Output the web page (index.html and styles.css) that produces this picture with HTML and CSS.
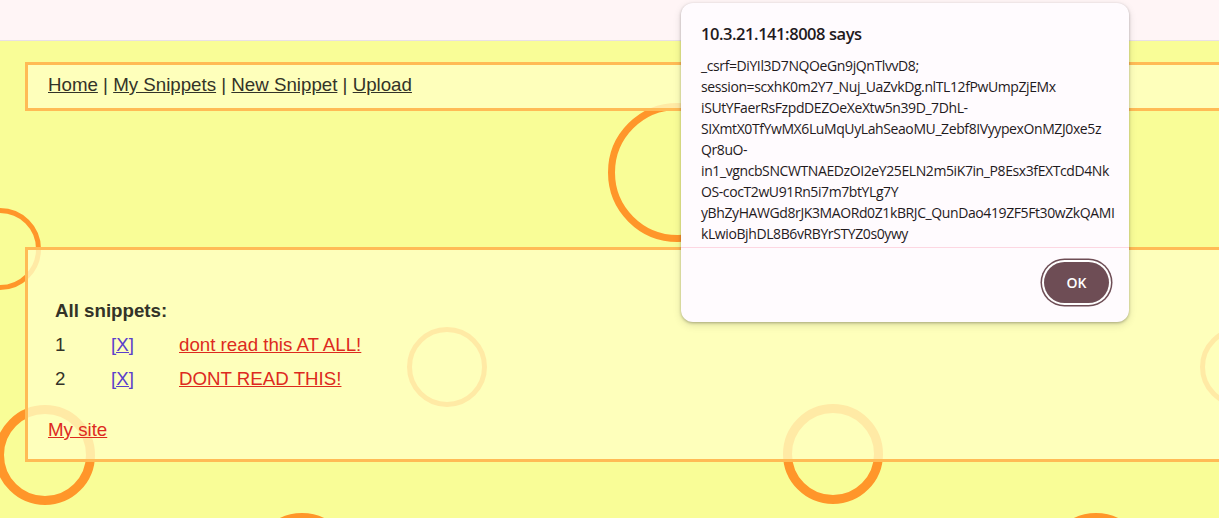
FILE: index.html
```html
<!DOCTYPE html>
<html lang="en">
<head>
<meta charset="utf-8">
<title>Snippets</title>
<link rel="stylesheet" href="styles.css">
</head>
<body>
<div class="topbar"></div>
<div class="decor" aria-hidden="true">
  <div class="ring ring-a"></div>
  <div class="ring ring-b"></div>
  <div class="ring ring-c"></div>
  <div class="ring ring-d"></div>
  <div class="ring ring-e"></div>
  <div class="ring ring-f"></div>
  <div class="ring ring-g"></div>
  <div class="ring ring-h"></div>
</div>
<main class="page">
  <nav class="box nav">
    <a href="#">Home</a> | <a href="#">My Snippets</a> | <a href="#">New Snippet</a> | <a href="#">Upload</a>
  </nav>
  <section class="box content">
    <div class="snippets">
      <div class="heading">All snippets:</div>
      <div class="row"><span class="num">1</span><a class="del" href="#">[X]</a><a class="title" href="#">dont read this AT ALL!</a></div>
      <div class="row"><span class="num">2</span><a class="del" href="#">[X]</a><a class="title" href="#">DONT READ THIS!</a></div>
    </div>
    <a class="mysite" href="#">My site</a>
  </section>
</main>
<div class="dialog" role="alertdialog">
  <div class="dialog-body">
    <div class="dialog-title">10.3.21.141:8008 says</div>
    <div class="dialog-msg">
      <span class="ln">_csrf=DiYIl3D7NQOeGn9jQnTlvvD8;</span>
      <span class="ln">session=scxhK0m2Y7_Nuj_UaZvkDg.nlTL12fPwUmpZjEMx</span>
      <span class="ln">iSUtYFaerRsFzpdDEZOeXeXtw5n39D_7DhL-</span>
      <span class="ln">SIXmtX0TfYwMX6LuMqUyLahSeaoMU_Zebf8IVyypexOnMZJ0xe5z</span>
      <span class="ln">Qr8uO-</span>
      <span class="ln">in1_vgncbSNCWTNAEDzOI2eY25ELN2m5iK7in_P8Esx3fEXTcdD4Nk</span>
      <span class="ln">OS-cocT2wU91Rn5i7m7btYLg7Y</span>
      <span class="ln">yBhZyHAWGd8rJK3MAORd0Z1kBRJC_QunDao419ZF5Ft30wZkQAMI</span>
      <span class="ln">kLwioBjhDL8B6vRBYrSTYZ0s0ywy</span>
    </div>
  </div>
  <div class="dialog-foot">
    <button class="ok" type="button">OK</button>
  </div>
</div>
</body>
</html>
```
FILE: styles.css
```css
html, body {
  margin: 0;
  padding: 0;
  height: 518px;
  overflow: hidden;
}
body {
  position: relative;
  background: #f9fd97;
  font-family: "Liberation Sans", Arial, sans-serif;
  font-size: 18.72px;
  color: #333328;
}
.topbar {
  position: relative;
  z-index: 2;
  height: 40px;
  background: #fff5f6;
  border-bottom: 1px solid #e9e0e6;
}

/* decorative rings */
.decor {
  position: absolute;
  inset: 0;
  z-index: 0;
  overflow: hidden;
}
.ring {
  position: absolute;
  box-sizing: border-box;
  border-radius: 50%;
  border: 9px solid #ff962a;
}
.ring-a { left: -41px; top: 208px; width: 82px; height: 82px; border-width: 5px; }
.ring-b { left: -5px; top: 405px; width: 100px; height: 100px; }
.ring-c { left: 783px; top: 404px; width: 100px; height: 100px; }
.ring-d { left: 407px; top: 327px; width: 80px; height: 80px; border-width: 5px; }
.ring-e { left: 1200px; top: 327px; width: 80px; height: 80px; border-width: 5px; }
.ring-f { left: 608px; top: 103px; width: 139px; height: 139px; border-width: 7px; }
.ring-g { left: 252px; top: 513px; width: 100px; height: 100px; }
.ring-h { left: 1046px; top: 513px; width: 100px; height: 100px; }

/* page */
.page {
  position: relative;
  z-index: 1;
  padding-top: 21px;
  display: flex;
  flex-direction: column;
  gap: 136px;
}
.box {
  margin-left: 25px;
  margin-right: -80px;
  border: 3px solid #ffbb55;
  background: rgba(255, 255, 196, 0.8);
}
.nav {
  padding: 9px 20px 12px;
  line-height: 22px;
}
.nav a {
  color: #333328;
  text-decoration: underline;
}
.content {
  padding: 44px 20px 18px;
  display: flex;
  flex-direction: column;
  gap: 23px;
}
.snippets {
  margin-left: 7px;
  display: flex;
  flex-direction: column;
}
.heading {
  font-weight: bold;
  line-height: 34px;
}
.row {
  display: grid;
  grid-template-columns: 56px 68px auto;
  line-height: 34px;
  justify-items: start;
}
.del {
  color: #5a3fcc;
  text-decoration: underline;
}
.title, .mysite {
  color: #dd2a1e;
  text-decoration: underline;
}
.mysite {
  line-height: 22px;
  align-self: flex-start;
}

/* alert dialog */
.dialog {
  position: absolute;
  z-index: 5;
  left: 681px;
  top: 3px;
  width: 448px;
  height: 319px;
  box-sizing: border-box;
  background: #fffbfe;
  border-radius: 12px;
  box-shadow: 0 1px 3px rgba(0, 0, 0, 0.28), 0 3px 8px rgba(0, 0, 0, 0.12);
  display: flex;
  flex-direction: column;
  font-family: "Open Sans", "Noto Sans", sans-serif;
  color: #1f1a1d;
  overflow: hidden;
}
.dialog-body {
  box-sizing: border-box;
  height: 245px;
  padding: 19px 20px 0;
  border-bottom: 1px solid #fdd7e2;
}
.dialog-title {
  font-size: 16.5px;
  font-weight: 600;
  line-height: 24px;
  letter-spacing: -0.45px;
}
.dialog-msg {
  margin-top: 9px;
  font-size: 14px;
  line-height: 21px;
  letter-spacing: -0.4px;
}
.ln {
  display: block;
  white-space: nowrap;
}
.dialog-foot {
  flex: 1;
  display: flex;
  justify-content: flex-end;
  align-items: flex-start;
  padding: 14px 20px 0;
}
.ok {
  width: 65px;
  height: 41px;
  border: 0;
  border-radius: 999px;
  background: #6e4d55;
  color: #ffffff;
  font-family: "Open Sans", "Noto Sans", sans-serif;
  font-size: 14px;
  font-weight: 600;
  box-shadow: 0 0 0 2px #ffffff, 0 0 0 3.5px #6e4d55;
  cursor: pointer;
}
```
